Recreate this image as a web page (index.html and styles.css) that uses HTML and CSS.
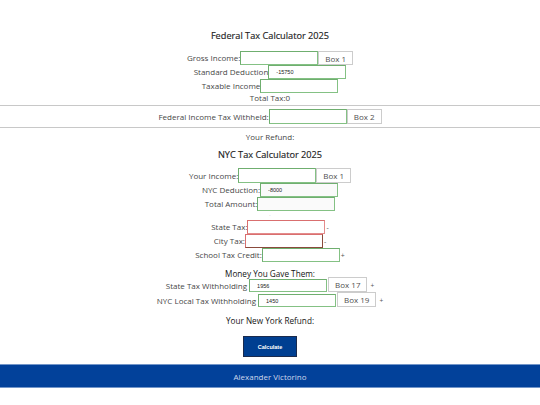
FILE: index.html
```html
<!DOCTYPE html>
<html lang="en">
<head>
<meta charset="utf-8">
<title>Tax Calculator</title>
<link rel="stylesheet" href="styles.css">
</head>
<body>
<main class="page">
  <h2 class="title title-fed">Federal Tax Calculator 2025</h2>
  <div class="row"><label class="lbl">Gross Income:</label><input class="field" type="text"><span class="box">Box 1</span></div>
  <div class="row"><label class="lbl">Standard Deduction</label><input class="field" type="text" value="-15750"></div>
  <div class="row"><label class="lbl">Taxable Income</label><input class="field" type="text"></div>
  <p class="line total-tax">Total Tax:0</p>
  <hr class="rule rule-1">
  <div class="row row-withheld"><label class="lbl">Federal Income Tax Withheld:</label><input class="field" type="text"><span class="box">Box 2</span></div>
  <hr class="rule rule-2">
  <p class="line refund">Your Refund:</p>

  <h2 class="title title-nyc">NYC Tax Calculator 2025</h2>
  <div class="row row-income"><label class="lbl">Your Income:</label><input class="field" type="text"><span class="box">Box 1</span></div>
  <div class="row"><label class="lbl">NYC Deduction:</label><input class="field field-ro" type="text" value="-8000"></div>
  <div class="row"><label class="lbl">Total Amount:</label><input class="field field-ro" type="text"></div>
  <div class="dot-line"><span class="dot">.</span></div>
  <div class="row"><label class="lbl">State Tax:</label><input class="field field-red" type="text"><span class="sign">-</span></div>
  <div class="row"><label class="lbl">City Tax:</label><input class="field field-red field-city" type="text"><span class="sign">-</span></div>
  <div class="row"><label class="lbl">School Tax Credit:</label><input class="field" type="text"><span class="sign">+</span></div>

  <p class="heading money">Money You Gave Them:</p>
  <div class="row row-wh"><label class="lbl">State Tax Withholding</label><input class="field field-wh" type="text" value="1956"><span class="box box-wh">Box 17</span><span class="sign sign-wh">+</span></div>
  <div class="row row-wh"><label class="lbl">NYC Local Tax Withholding</label><input class="field field-wh" type="text" value="1450"><span class="box box-wh">Box 19</span><span class="sign sign-wh">+</span></div>

  <p class="heading ny-refund">Your New York Refund:</p>
  <button class="calc-btn" type="button">Calculate</button>
</main>
<footer class="footer">Alexander Victorino</footer>
</body>
</html>
```

FILE: styles.css
```css
* { box-sizing: border-box; }

html, body {
  margin: 0;
  padding: 0;
  background: #ffffff;
}

body {
  font-family: "Open Sans", "Noto Sans", sans-serif;
  font-size: 8px;
  color: #474747;
}

.page {
  display: flex;
  flex-direction: column;
  align-items: center;
}

.title {
  margin: 0;
  font-size: 9.2px;
  font-weight: 400;
  line-height: 14px;
  height: 14px;
  color: #1c1c1c;
  -webkit-text-stroke: 0.15px #1c1c1c;
}

.title-fed { margin-top: 29px; margin-bottom: 8px; }
.title-nyc { margin-top: 5px; margin-bottom: 6px; }

.row {
  display: flex;
  justify-content: center;
  align-items: stretch;
  height: 14px;
}

.row-withheld { height: 15px; margin-top: 3px; }
.row-income { height: 15px; }

.lbl {
  display: flex;
  align-items: center;
  white-space: nowrap;
  line-height: 14px;
}

.field {
  width: 78px;
  height: 100%;
  margin: 0;
  padding: 0 0 0 7px;
  border: 1px solid #84c184;
  border-top-color: #6fae6f;
  border-left-color: #6fae6f;
  background: #ffffff;
  font-family: "Liberation Sans", Arial, sans-serif;
  font-size: 5.5px;
  color: #222222;
  outline: none;
}

.field-ro { background: #fafafa; }

.field-red {
  border-color: #e48c8c;
  border-top-color: #d96f6f;
  border-left-color: #d96f6f;
}

.field-city {
  border-bottom-color: #8a4a3c;
  border-right-color: #8a4a3c;
}

.box {
  display: flex;
  align-items: center;
  justify-content: center;
  padding: 0 6px;
  border: 1px solid #cccccc;
  background: #ffffff;
  color: #505050;
  white-space: nowrap;
}

.sign {
  display: flex;
  align-items: center;
  padding-left: 1px;
  font-size: 7px;
  color: #555555;
}

.line {
  margin: 0;
  line-height: 10px;
  height: 10px;
}

.total-tax { margin-top: 0; }
.refund { margin-top: 3px; height: 12px; line-height: 12px; }

.rule {
  align-self: stretch;
  margin: 0;
  height: 0;
  border: 0;
  border-top: 1px solid #c8c8c8;
}

.rule-1 { margin-top: 2px; }
.rule-2 { margin-top: 3px; }

.dot-line {
  height: 9px;
  line-height: 6px;
  font-size: 5px;
  color: #bdbdbd;
}

.heading {
  margin: 0;
  height: 10px;
  font-size: 8.2px;
  line-height: 14px;
  color: #151515;
  white-space: nowrap;
}

.money { margin-top: 5px; }
.ny-refund { margin-top: 7px; height: 14px; line-height: 14px; }

.row-wh {
  height: 15px;
  align-items: flex-end;
}

.row-wh .lbl { height: 13px; padding-right: 2px; }

.field-wh { height: 13px; }

.box-wh { height: 15px; margin-left: 1px; }

.sign-wh { height: 13px; padding-left: 3px; font-size: 6.5px; }

.calc-btn {
  margin-top: 8px;
  width: 54px;
  height: 21px;
  padding: 0;
  border: 1px solid #1b2b4d;
  background: #003f91;
  color: #ffffff;
  font-family: "Liberation Sans", Arial, sans-serif;
  font-weight: 700;
  font-size: 5.5px;
}

.footer {
  margin-top: 7px;
  height: 24px;
  display: flex;
  align-items: center;
  justify-content: center;
  background: #02419a;
  border-top: 1px solid #7396c9;
  border-bottom: 1px solid #7396c9;
  color: #cfd9ec;
  font-size: 8px;
}
```
